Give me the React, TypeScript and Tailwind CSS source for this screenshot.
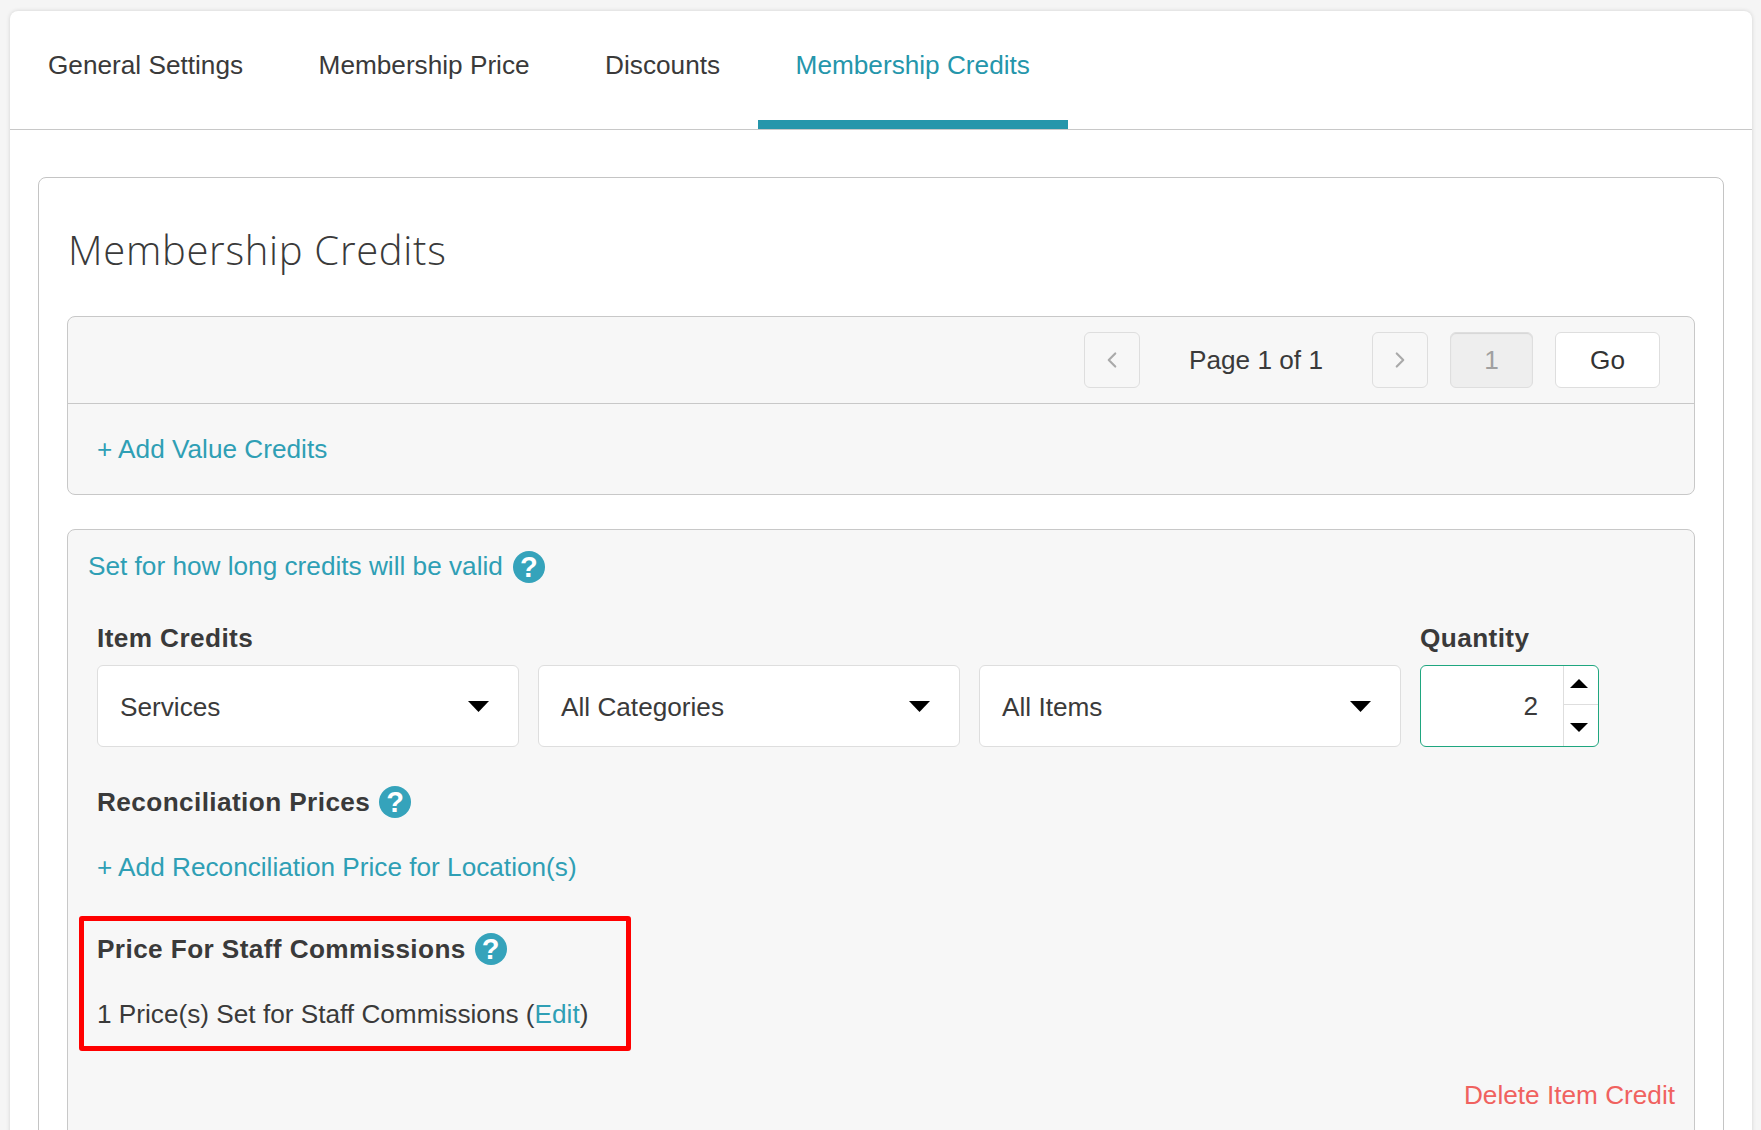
import { ChevronLeft, ChevronRight } from "lucide-react";

const tabs = ["General Settings", "Membership Price", "Discounts", "Membership Credits"];

function HelpIcon({ className = "" }: { className?: string }) {
    return (
        <span className={"inline-flex w-[32px] h-[32px] shrink-0 rounded-full bg-[#35a3bb] items-center justify-center text-white text-[29px] font-bold leading-none " + className}>?</span>
    );
}

function Caret({ up = false, small = false }: { up?: boolean; small?: boolean }) {
    return (
        <svg width={small ? 18 : 21} height={small ? 9 : 11} viewBox="0 0 20 11" preserveAspectRatio="none" className="block">
            <path d={up ? "M10 0 L20 11 L0 11 Z" : "M0 0 L20 0 L10 11 Z"} fill="#000" />
        </svg>
    );
}

function Select({ label }: { label: string }) {
    return (
        <div className="w-[422px] h-[82px] bg-white border border-[#dedede] rounded-[6px] flex items-center justify-between pl-[22px] pr-[29px]">
            <span className="pt-[2px]">{label}</span>
            <Caret />
        </div>
    );
}

export default function App() {
    return (
        <div className="h-[1130px] overflow-hidden bg-[#f5f5f5] pt-[11px] pl-[10px] pr-[9px] font-['Liberation_Sans',sans-serif] text-[26.2px] leading-[32px] text-[#3a3a3a]">
            <div className="h-[1200px] bg-white rounded-t-[8px] shadow-[0_0_4px_rgba(0,0,0,0.15)]">
                <div className="flex h-[119px] border-b border-[#c8c8c8]">
                    {tabs.map((t, i) => (
                        <div key={t} className={i === 3 ? "h-[118px] px-[38px] pt-[38px] border-b-[9px] border-[#2596ab] text-[#2596ab]" : "h-[118px] pl-[38px] pr-[37.5px] pt-[38px]"}>
                            {t}
                        </div>
                    ))}
                </div>
                <div className="mt-[47px] mx-[28px] h-[1000px] border border-[#c4c4c4] rounded-[8px] px-[28px]">
                    <h1 className="mt-[47px] ml-[1px] h-[50px] font-['Open_Sans',sans-serif] font-light text-[40px] leading-[50px] tracking-[0.7px] text-[#3a3a3a]">Membership Credits</h1>
                    <div className="mt-[41px] h-[179px] bg-[#f7f7f7] border border-[#c8c8c8] rounded-[8px]">
                        <div className="h-[87px] border-b border-[#c8c8c8] flex items-center justify-end pr-[34px]">
                            <div className="w-[56px] h-[56px] border border-[#dedede] rounded-[6px] flex items-center justify-center text-[#aaaaaa]">
                                <ChevronLeft size={26} strokeWidth={2} />
                            </div>
                            <span className="w-[232px] text-center">Page 1 of 1</span>
                            <div className="w-[56px] h-[56px] border border-[#dedede] rounded-[6px] flex items-center justify-center text-[#aaaaaa]">
                                <ChevronRight size={26} strokeWidth={2} />
                            </div>
                            <div className="ml-[22px] w-[83px] h-[56px] bg-[#eeeeee] border border-[#dedede] rounded-[6px] flex items-center justify-center text-[#a0a0a0] shadow-[inset_0_1px_1px_rgba(0,0,0,0.1)]">1</div>
                            <div className="ml-[22px] w-[105px] h-[56px] bg-white border border-[#dedede] rounded-[6px] flex items-center justify-center text-[#333333]">Go</div>
                        </div>
                        <div className="pl-[29px] pt-[29px] text-[#2f9fb5]">+ Add Value Credits</div>
                    </div>
                    <div className="mt-[34px] h-[700px] bg-[#f7f7f7] border border-[#c8c8c8] rounded-[8px] pt-[19px]">
                        <div className="flex items-center gap-[10px] pl-[20px] h-[34px] text-[#2f9fb5]">
                            Set for how long credits will be valid <HelpIcon className="mt-[2px]" />
                        </div>
                        <div className="pl-[29px] mt-[39px] flex gap-[19px]">
                            <div>
                                <div className="font-bold h-[32px] tracking-[0.4px]">Item Credits</div>
                                <div className="mt-[11px] flex gap-[19px]">
                                    <Select label="Services" />
                                    <Select label="All Categories" />
                                    <Select label="All Items" />
                                </div>
                            </div>
                            <div>
                                <div className="font-bold h-[32px] tracking-[0.4px]">Quantity</div>
                                <div className="mt-[11px] w-[179px] h-[82px] bg-white border border-[#1fa67f] rounded-[6px] flex">
                                    <div className="w-[142px] flex items-center justify-end pr-[25px]">2</div>
                                    <div className="flex-1 border-l border-[#dedede] flex flex-col">
                                        <div className="h-[39px] border-b border-[#dedede] flex items-center justify-center pr-[4px] pb-[3px]">
                                            <Caret up small />
                                        </div>
                                        <div className="flex-1 flex items-center justify-center pr-[4px] pt-[3px]">
                                            <Caret small />
                                        </div>
                                    </div>
                                </div>
                            </div>
                        </div>
                        <div className="pl-[29px] mt-[38px] flex items-center gap-[9px] h-[34px] font-bold tracking-[0.4px]">
                            Reconciliation Prices <HelpIcon />
                        </div>
                        <div className="pl-[29px] mt-[32px] text-[#2f9fb5]">+ Add Reconciliation Price for Location(s)</div>
                        <div className="ml-[11px] mt-[33px] w-[552px] h-[135px] border-[5px] border-[#ff0000] rounded-[3px] pl-[13px] pt-[11px]">
                            <div className="flex items-center gap-[9px] h-[34px] font-bold tracking-[0.4px]">
                                Price For Staff Commissions <HelpIcon />
                            </div>
                            <div className="mt-[32px]">
                                1 Price(s) Set for Staff Commissions (<span className="text-[#2f9fb5]">Edit</span>)
                            </div>
                        </div>
                        <div className="mt-[28px] pr-[19px] text-right text-[#f0625f]">Delete Item Credit</div>
                    </div>
                </div>
            </div>
        </div>
    );
}
